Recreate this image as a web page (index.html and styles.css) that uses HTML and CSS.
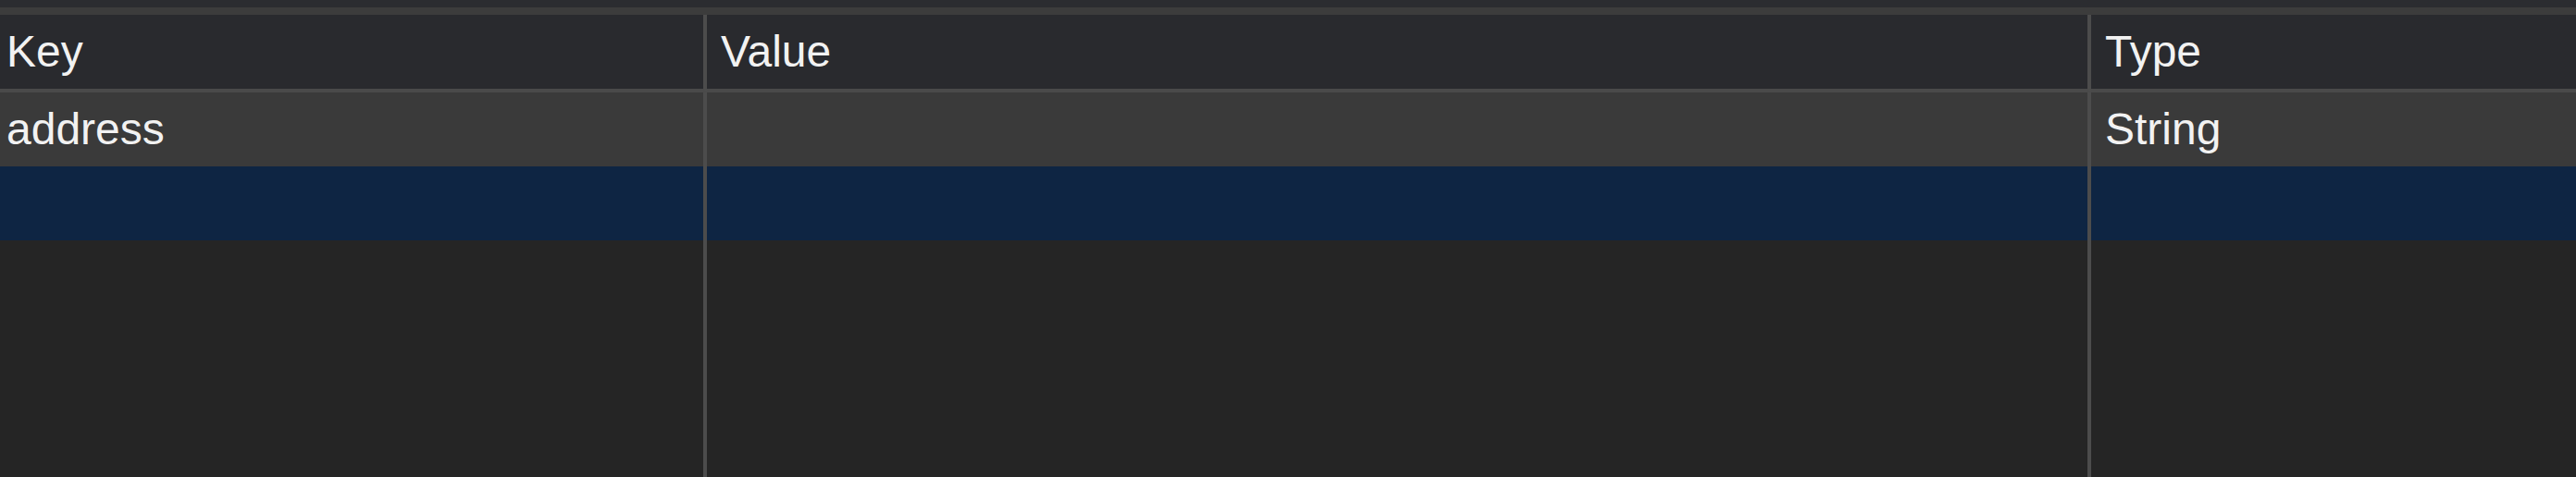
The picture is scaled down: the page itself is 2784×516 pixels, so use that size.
FILE: index.html
```html
<!DOCTYPE html>
<html lang="en">
<head>
    <meta charset="UTF-8">
    <meta name="viewport" content="width=device-width, initial-scale=1.0">
    <title>Properties</title>
    <link rel="stylesheet" href="styles.css">
</head>
<body>
    <div class="toolbar"></div>
    <div class="table">
        <div class="cell head first">Key</div>
        <div class="cell head">Value</div>
        <div class="cell head last">Type</div>

        <div class="cell row first">address</div>
        <div class="cell row"></div>
        <div class="cell row last">String</div>

        <div class="cell row selected first"></div>
        <div class="cell row selected"></div>
        <div class="cell row selected last"></div>

        <div class="cell filler first"></div>
        <div class="cell filler"></div>
        <div class="cell filler last"></div>
    </div>
</body>
</html>
```

FILE: styles.css
```css
html, body {
    height: 100%;
}

body {
    margin: 0;
    background-color: #252525;
    font-family: "Liberation Sans", Arial, sans-serif;
    color: #f2f2f2;
    display: flex;
    flex-direction: column;
    overflow: hidden;
}

.toolbar {
    height: 8px;
    background-color: #2b2c30;
    border-bottom: 8px solid #3c3c3c;
}

.table {
    flex: 1;
    display: grid;
    grid-template-columns: 764px 1496px 1fr;
    grid-template-rows: 84px 80px 80px 1fr;
}

.cell {
    border-right: 4px solid #4c4c4c;
    font-size: 48px;
    line-height: 80px;
    padding-left: 15px;
    white-space: nowrap;
    overflow: hidden;
}

.cell.first {
    padding-left: 7px;
}

.cell.last {
    border-right: none;
}

.head {
    background-color: #292a2e;
    border-bottom: 4px solid #4a4a4a;
}

.row {
    background-color: #3a3a3a;
}

.row.selected {
    background-color: #0e2543;
}

.filler {
    background-color: #252525;
}
```
